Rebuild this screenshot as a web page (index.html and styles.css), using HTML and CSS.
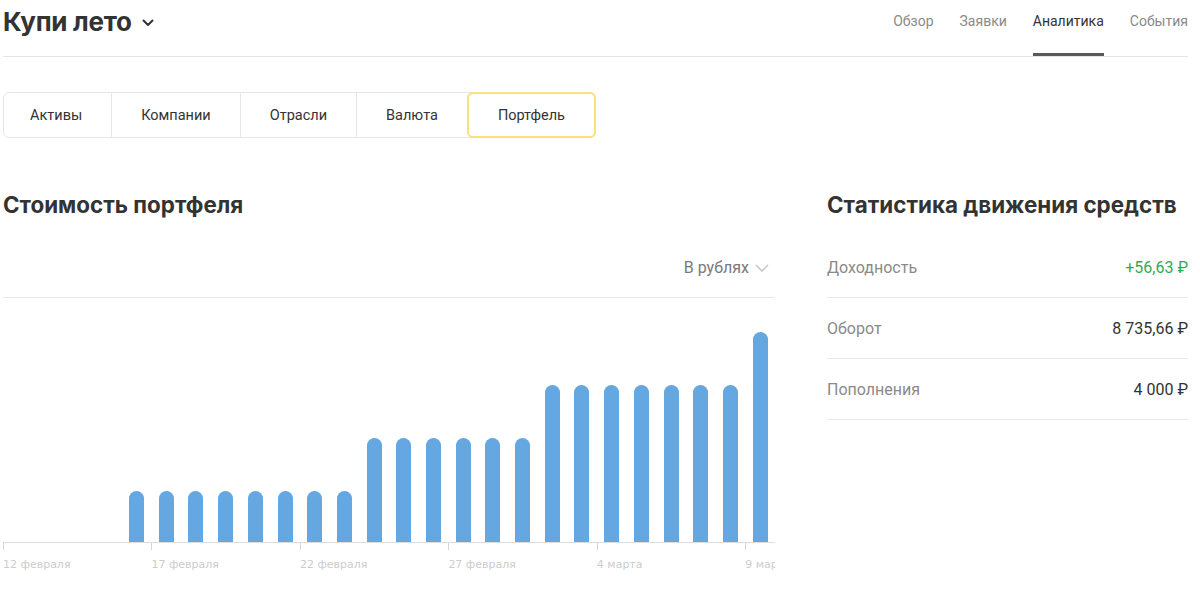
FILE: index.html
```html
<!DOCTYPE html>
<html lang="ru">
<head>
    <meta charset="UTF-8">
    <title>Купи лето — Аналитика</title>
    <link rel="stylesheet" href="styles.css">
</head>
<body>
    <div class="page">
        <header class="header">
            <div class="account">
                <span class="account-name">Купи лето</span>
                <svg class="account-chevron" width="12" height="8" viewBox="0 0 12 8"><path d="M1.5 1.5 L6 6 L10.5 1.5" fill="none" stroke="#333" stroke-width="2" stroke-linecap="round" stroke-linejoin="round"/></svg>
            </div>
            <nav class="nav">
                <a class="nav-link">Обзор</a>
                <a class="nav-link">Заявки</a>
                <a class="nav-link active">Аналитика</a>
                <a class="nav-link">События</a>
            </nav>
        </header>

        <div class="tabs">
            <div class="tab">Активы</div>
            <div class="tab">Компании</div>
            <div class="tab">Отрасли</div>
            <div class="tab">Валюта</div>
            <div class="tab selected">Портфель</div>
        </div>

        <div class="content">
            <section class="portfolio">
                <h2 class="section-title">Стоимость портфеля</h2>
                <div class="chart-toolbar">
                    <span class="currency">В рублях</span>
                    <svg class="currency-chevron" width="14" height="8" viewBox="0 0 14 8"><path d="M1 1 L7 7 L13 1" fill="none" stroke="#c4c4c4" stroke-width="1.5"/></svg>
                </div>
                <div class="plot">
                    <div class="slot"></div>
                    <div class="slot"></div>
                    <div class="slot"></div>
                    <div class="slot"></div>
                    <div class="slot"><div class="bar" style="height: 51px"></div></div>
                    <div class="slot"><div class="bar" style="height: 51px"></div></div>
                    <div class="slot"><div class="bar" style="height: 51px"></div></div>
                    <div class="slot"><div class="bar" style="height: 51px"></div></div>
                    <div class="slot"><div class="bar" style="height: 51px"></div></div>
                    <div class="slot"><div class="bar" style="height: 51px"></div></div>
                    <div class="slot"><div class="bar" style="height: 51px"></div></div>
                    <div class="slot"><div class="bar" style="height: 51px"></div></div>
                    <div class="slot"><div class="bar" style="height: 104px"></div></div>
                    <div class="slot"><div class="bar" style="height: 104px"></div></div>
                    <div class="slot"><div class="bar" style="height: 104px"></div></div>
                    <div class="slot"><div class="bar" style="height: 104px"></div></div>
                    <div class="slot"><div class="bar" style="height: 104px"></div></div>
                    <div class="slot"><div class="bar" style="height: 104px"></div></div>
                    <div class="slot"><div class="bar" style="height: 157px"></div></div>
                    <div class="slot"><div class="bar" style="height: 157px"></div></div>
                    <div class="slot"><div class="bar" style="height: 157px"></div></div>
                    <div class="slot"><div class="bar" style="height: 157px"></div></div>
                    <div class="slot"><div class="bar" style="height: 157px"></div></div>
                    <div class="slot"><div class="bar" style="height: 157px"></div></div>
                    <div class="slot"><div class="bar" style="height: 157px"></div></div>
                    <div class="slot"><div class="bar" style="height: 210px"></div></div>
                </div>
                <div class="axis">
                    <div class="tick">12 февраля</div>
                    <div class="tick">17 февраля</div>
                    <div class="tick">22 февраля</div>
                    <div class="tick">27 февраля</div>
                    <div class="tick">4 марта</div>
                    <div class="tick last">9 марта</div>
                </div>
            </section>

            <section class="stats">
                <h2 class="section-title">Статистика движения средств</h2>
                <div class="stat-row">
                    <span class="stat-label">Доходность</span>
                    <span class="stat-value positive">+56,63 ₽</span>
                </div>
                <div class="stat-row">
                    <span class="stat-label">Оборот</span>
                    <span class="stat-value">8 735,66 ₽</span>
                </div>
                <div class="stat-row">
                    <span class="stat-label">Пополнения</span>
                    <span class="stat-value">4 000 ₽</span>
                </div>
            </section>
        </div>
    </div>
</body>
</html>
```

FILE: styles.css
```css
body {
    margin: 0;
    padding: 0 12px 0 3px;
    background-color: #ffffff;
    font-family: Roboto, "Liberation Sans", sans-serif;
    color: #333333;
}

.page {
    width: 1185px;
}

/* Шапка */
.header {
    display: flex;
    justify-content: space-between;
    height: 56px;
    border-bottom: 1px solid #e5e5e5;
}

.account {
    display: flex;
    align-items: center;
    height: 42px;
}

.account-name {
    font-family: Inter, "Liberation Sans", sans-serif;
    font-weight: 700;
    font-size: 26px;
    color: #333333;
    letter-spacing: -0.3px;
}

.account-chevron {
    margin-left: 10px;
    margin-top: 3px;
}

.nav {
    display: flex;
    gap: 26px;
}

.nav-link {
    display: block;
    box-sizing: border-box;
    height: 56px;
    padding-top: 13px;
    font-size: 14px;
    color: #8a8a8a;
    cursor: pointer;
}

.nav-link.active {
    color: #333333;
    border-bottom: 3px solid #5a5a5a;
}

/* Вкладки */
.tabs {
    display: inline-flex;
    margin-top: 35px;
    height: 46px;
    border: 1px solid #e6e6e6;
    border-radius: 6px;
    box-sizing: border-box;
}

.tab {
    display: flex;
    align-items: center;
    padding: 0 29px;
    font-size: 14.5px;
    color: #333333;
    border-left: 1px solid #e6e6e6;
    cursor: pointer;
}

.tab:first-child {
    padding-left: 26px;
    border-left: none;
}

.tab.selected {
    margin: -1px -1px -1px 0;
    padding: 0 29px;
    border: 2px solid #f7e27c;
    border-radius: 6px;
}

/* Контент */
.content {
    display: flex;
    gap: 52px;
    margin-top: 53px;
}

.portfolio {
    width: 772px;
}

.stats {
    width: 361px;
}

.section-title {
    margin: 0 0 18px;
    font-family: Inter, "Liberation Sans", sans-serif;
    font-weight: 700;
    font-size: 22.4px;
    line-height: 28px;
    color: #333333;
}

.chart-toolbar {
    display: flex;
    align-items: center;
    justify-content: flex-end;
    height: 60px;
    padding-right: 6px;
    border-bottom: 1px solid #e8e8e8;
}

.currency {
    font-size: 16px;
    color: #7a7a7a;
}

.currency-chevron {
    margin-left: 6px;
    margin-top: 2px;
}

.plot {
    display: grid;
    grid-template-columns: repeat(26, minmax(0, 1fr));
    align-items: end;
    height: 244px;
    border-bottom: 1px solid #dddddd;
}

.slot {
    display: flex;
    justify-content: center;
}

.bar {
    width: 15px;
    background-color: #65a7e0;
    border-radius: 7.5px 7.5px 0 0;
}

.axis {
    display: grid;
    grid-template-columns: repeat(26, minmax(0, 1fr));
    overflow: hidden;
    white-space: nowrap;
}

.tick {
    grid-column: span 5;
    font-family: "DejaVu Sans", Verdana, sans-serif;
    font-size: 11px;
    line-height: 13px;
    color: #cccccc;
}

.tick::before {
    content: "";
    display: block;
    width: 1px;
    height: 7px;
    margin-bottom: 8px;
    background-color: #d6d6d6;
}

.tick.last {
    grid-column: span 1;
}

/* Статистика */
.stat-row {
    display: flex;
    justify-content: space-between;
    align-items: center;
    height: 60px;
    border-bottom: 1px solid #e8e8e8;
}

.stat-label {
    font-size: 16px;
    color: #8a8a8a;
}

.stat-value {
    font-size: 16px;
    color: #333333;
}

.stat-value.positive {
    color: #35a852;
}
```
